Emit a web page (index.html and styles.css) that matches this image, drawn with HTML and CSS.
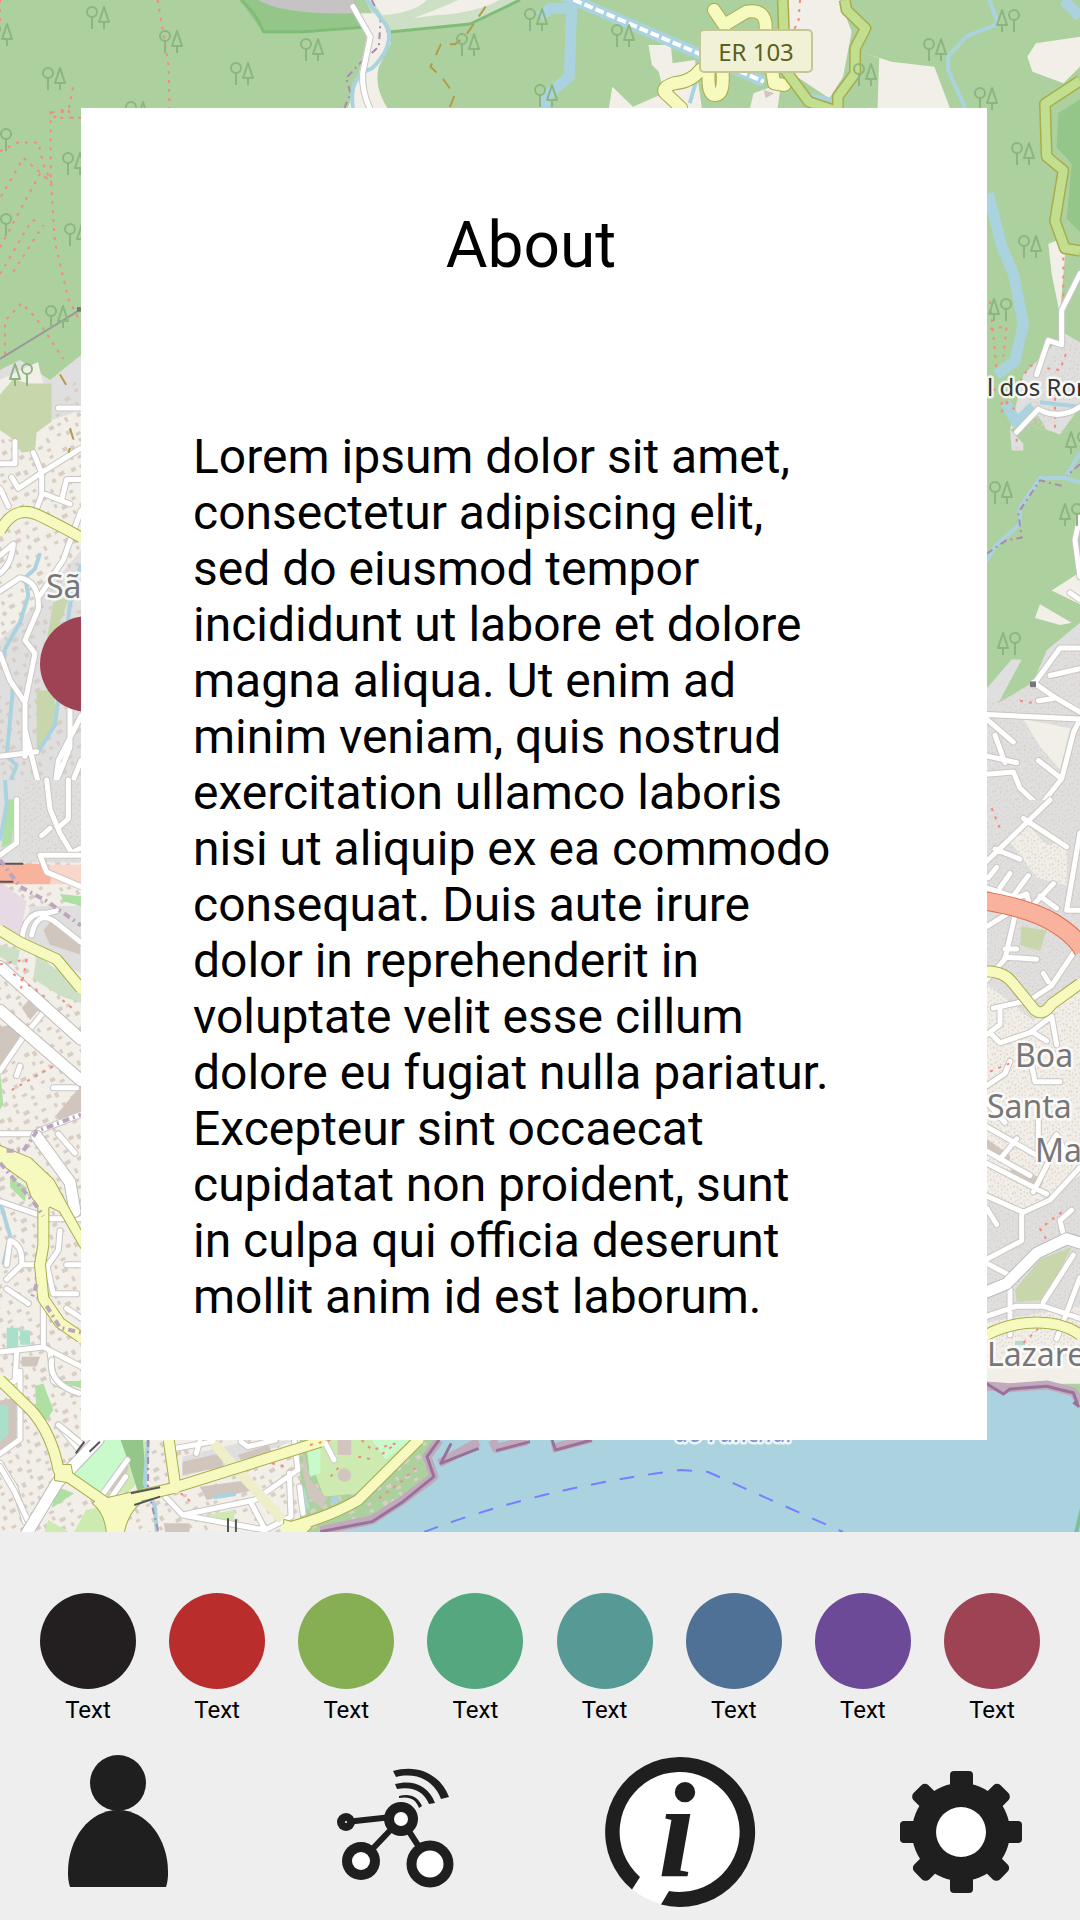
FILE: index.html
```html
<!DOCTYPE html>
<html lang="en">
<head>
<meta charset="utf-8">
<meta name="viewport" content="width=device-width, initial-scale=1">
<title>About</title>
<link rel="stylesheet" href="styles.css">
</head>
<body>
<main class="stage">
<svg class="map" viewBox="0 0 1080 1532" preserveAspectRatio="xMidYMid slice" aria-hidden="true">
  <defs>
    <g id="trees"><circle cx="6" cy="7" r="5"/><path d="M6 12V24M13 17L18 2L23 17ZM18 17V24"/></g>
    <g id="seert"><circle cx="18" cy="7" r="5"/><path d="M18 12V24M1 17L6 2L11 17ZM6 17V24"/></g>
    <pattern id="homes" width="53" height="47" patternUnits="userSpaceOnUse" patternTransform="rotate(-28)">
      <path class="home" d="M3 2h5v4h-5zM11 4h4v5h-4zM22 1h3v4h-3zM28 6h6v4h-6zM41 3h4v3h-4zM6 13h3v4h-3zM13 16h4v3h-4zM24 14h6v4h-6zM36 15h3v4h-3zM45 12h5v3h-5zM1 24h5v4h-5zM10 25h4v3h-4zM19 23h3v5h-3zM32 25h4v4h-4zM41 22h6v4h-6zM5 34h4v3h-4zM14 36h5v4h-5zM26 33h3v4h-3zM35 37h5v3h-5zM46 33h3v5h-3zM22 42h5v3h-5zM42 43h4v3h-4z"/>
    </pattern>
    <path id="west-streets" d="M0 815H45V765M35 845L55 870L125 835L100 790M125 835L243 780M125 830V880L210 905M125 885L110 915M185 895L200 850H243M0 870L25 910M0 1100L60 1070Q120 1080 115 1140L75 1210L105 1240L75 1350V1470M0 1240L30 1300L75 1350M0 1470L110 1460M175 690H243M243 920L190 1030L120 1110M0 1020L40 995Q35 1040 0 1060M75 1410L115 1530M160 1568L175 1480L243 1380M210 1350V1450L150 1560M243 1480L195 1568"/>
    <path id="south-west-streets" d="M50 40V130L0 155M140 0L150 60L180 110L215 150L243 140M150 100L125 115M205 0V80L180 95M65 330Q75 270 140 275L170 270M95 320Q110 270 160 290L243 335M0 600L70 530L130 480M60 590L50 610M160 635H230M0 730H100L130 720L243 690M0 1180L130 1170L243 1210M130 1060V1170M150 1180L160 1240L230 1265M50 1180L45 1240L0 1250M0 870L150 905H243M20 1000L30 950Q70 960 65 1000L20 1030M70 1000H140L160 1060H230M180 930L175 970L145 1000M20 1050L85 1080M200 1000H243M200 1090L243 1110M175 730L225 770M60 1220V1360L0 1390M175 1330L235 1380M0 1410L45 1460L75 1530"/>
    <path id="avenues" d="M0 385L243 535M0 475L243 620M110 735L210 830L225 890"/>
    <path id="harbour-streets" d="M510 265L620 245M570 280L580 245M700 245L720 260L800 240M530 465L740 420L865 330L855 245M840 340L845 470L770 510L730 430M480 410L530 465L660 490L770 510M0 320L40 390L80 480M170 195L235 250M150 0Q140 70 230 100M300 400L370 300M325 410L365 350M870 380L880 460M945 250L970 300"/>
    <path id="east-streets" d="M300 400L245 480V555L205 545L170 620M110 745L175 695Q240 720 300 690M300 930L285 980L300 1060M160 1295L240 1215H300M160 1290L230 1325L300 1355M175 1330L220 1325M210 1275L300 1260M20 1360L300 1370M20 1370L100 1420M45 1405L75 1465M20 1450L110 1465M20 1490L100 1485L120 1520L190 1568M175 1460L245 1500L280 1400L300 1370M245 1500L185 1555M270 1095L300 1110"/>
    <path id="south-east-streets" d="M210 0L20 150M130 45L260 115M45 120L120 145M25 190L50 165M60 215L90 180M100 235L145 185M20 215L110 240L140 230L150 265L220 205M180 235L230 265M300 80L260 270H300M20 310L110 265L75 390L20 440M75 365H110M75 385L170 390M280 375L215 455L150 490L40 510M190 425L205 445M20 575L60 550V510M30 570L60 595L150 570L215 530L230 600M160 570L200 590M20 700L75 670L90 640M155 650L165 690H240M20 740L75 790M20 800L190 880M20 860L150 920M20 890L200 965M110 830L60 880M190 870L230 820L260 870M160 960L210 880M20 970L130 1010L210 980L300 900M125 1015V1080L20 1125M20 1000L50 1040M20 1135L90 1165M275 1005L240 1030L255 1080M90 1200V1310M20 1265L110 1240H190L300 1270M190 1230L280 1115M230 1320L300 1170M175 780V880L240 830"/>
    <path id="hairpins" d="M505 30L535 75L600 35Q660 25 655 90M465 210Q440 245 390 250Q345 265 370 285L410 324M490 210Q485 290 510 285Q535 285 530 215M675 220L680 250L710 255"/>
    <path id="hill-roads" d="M705 0L712 210L780 305L850 330M885 0L890 30L945 85L915 145V220L865 290V330"/>
    <path id="south-west-main" d="M0 310L60 335L170 370L243 430M130 880V960L120 1000L130 1070L180 1120L243 1150"/>
    <path id="harbour-main" d="M0 60L90 150Q150 220 170 330L310 430L500 385L930 245M490 240L510 385M1215 240L1040 420Q960 470 830 505M340 430V525"/>
    <path id="east-main" d="M0 420Q70 415 100 450L165 515Q190 530 215 500L300 450M20 1310Q90 1280 170 1280T300 1310"/>
  </defs>
  <rect class="forest" width="1080" height="1532"/>

  <!-- northern hills -->
  <g transform="scale(.3444 .3333)">
    <path class="park" d="M695 0L765 98L1050 78L1030 0Z"/>
    <path class="quarry" d="M750 0Q820 45 1030 40V0Z"/>
    <path class="meadow" d="M1060 0L1110 98L1365 72L1510 0Z"/>
    <path class="land" d="M1080 0L1110 45Q1200 40 1240 0ZM1200 55Q1290 20 1330 0H1450Q1380 40 1270 45Z"/>
    <path class="edge" d="M700 0Q745 40 765 95H880L1050 82M1110 98L1365 72L1510 0"/>
    <path class="land" d="M1030 40L1065 110L1040 230L1010 324H1125Q1085 260 1100 200L1135 130L1100 40Z"/>
    <path class="admin" d="M1080 0L1105 60L1100 140L1040 195L1005 235L1018 280L1000 324"/>
    <path class="river" d="M1065 0L1125 80Q1145 140 1080 205Q1010 230 1025 324"/>
    <path class="casing" d="M1025 20L1075 110L1053 220Q1050 270 1073 324"/>
    <path class="road" d="M1025 20L1075 110L1053 220Q1050 270 1073 324"/>
    <path class="track" d="M1410 20L1350 110L1320 133H1280L1250 200L1285 235L1320 285L1305 324"/>
    <path class="trail" d="M458 0L490 200L492 324M0 0V95M212 262L200 324L145 360M175 353H240"/>
  </g>
  <g transform="translate(540 0) scale(.3444 .3333)">
    <path class="land" d="M720 0H870L905 95L880 230L840 295L760 240L700 200ZM315 135H380L385 190L450 180L470 324H200L210 260L270 320L360 280L345 215L325 195ZM930 155L1020 185L1145 200L1190 324H980L985 175ZM1568 110L1440 130L1415 170L1430 215L1520 250L1568 200ZM620 280L700 250L690 324H610Z"/>
    <path class="river wide" d="M0 50L30 25H92L85 230L15 290V324"/>
    <path class="river" d="M1305 0L1330 72L1240 108L1185 170V210L1235 324M465 200L435 310M780 285L850 300"/>
    <path class="river wide" d="M65 -15L460 160L650 245M1520 0L1568 50"/>
    <path class="stripe" d="M65 -15L460 160L650 245"/>
    <use class="ycase wide" href="#hairpins"/><use class="yellow wide" href="#hairpins"/>
    <use class="ycase" href="#hill-roads"/><use class="lime" href="#hill-roads"/>
    <path class="trail" d="M755 0L750 70L735 90"/>
    <path class="block" d="M650 270L680 280L655 295Z"/>
  </g>

  <!-- west side -->
  <path class="urban" d="M0 370L20 360L50 380L81 355V790H0Z"/>
  <path class="land" d="M0 380L38 362L52 420L81 410V550L40 600L0 640Z"/>
  <path class="texture" d="M0 435L35 450L81 370V790H0Z"/>
  <g transform="translate(0 100) scale(.3333 .4464)">
    <path class="trail" d="M0 115L55 95H115L130 145L155 185L70 130L0 220M0 330L120 165L150 180M0 390L95 270L120 270M40 385L130 280M152 25V170L165 320L205 445L243 500M15 570V495L65 455L110 490L190 580M155 28L205 20L210 40H240"/>
    <path class="power" d="M0 580L240 470"/>
    <path class="scrub" d="M0 660L40 625L85 635H155V720L110 745L105 785L65 790L30 755L0 740ZM160 1125L210 1110L165 1200L140 1210ZM110 1325L165 1320V1400L110 1460Z"/>
    <path class="river" d="M120 1015L105 1050L75 1070L85 1110L60 1170L15 1230L10 1260M243 1040L210 1130L165 1400L115 1460M40 1310L20 1470L50 1490L10 1568"/>
    <use class="casing" href="#west-streets"/><use class="road" href="#west-streets"/>
    <path class="ycase" d="M0 965Q45 905 115 930T243 980"/><path class="yellow" d="M0 965Q45 905 115 930T243 980"/>
    <path class="track" d="M180 615L200 640L220 630M210 735L220 760L205 790"/>
    <rect class="node" x="231" y="464" width="12" height="10"/>
  </g>
  <rect class="land" y="850" width="300" height="682"/>
  <rect class="texture" y="780" width="440" height="752"/>
  <g transform="translate(0 780) scale(.3333 .4847)">
    <path class="urban" d="M0 0H243V170H0ZM90 260H243V400L70 330Z"/>
    <path class="texture" d="M60 0H243V170H60Z"/>
    <path class="retail" d="M0 210L80 250L60 320L0 300Z"/>
    <path class="green" d="M20 40H45L35 130L5 140ZM0 600L10 670L0 680ZM180 235L243 240V260L190 250ZM105 1250L130 1245L160 1300L130 1330L110 1300ZM30 820L80 840L75 870L30 840ZM170 1240H243V1255Z"/>
    <path class="meadow" d="M0 340L60 350L50 385L0 365ZM110 360L243 430V460L180 445L100 410Z"/>
    <path class="block" d="M0 510L30 505L65 530L0 600ZM130 310L160 285L240 330V360L150 340ZM65 470L85 455L115 475L90 495ZM170 690L243 630V690L180 710ZM0 1280L50 1275V1360L0 1385ZM65 1190H120L110 1210H65Z"/>
    <path class="pitch" d="M20 1130H55V1175H20ZM0 1290H25V1350L0 1365ZM60 1135H90V1165H60Z"/>
    <path class="river" d="M15 0L20 50L0 125M0 870L30 940L10 1000"/>
    <use class="casing" href="#south-west-streets"/><use class="road" href="#south-west-streets"/>
    <use class="casing wide" href="#avenues"/><use class="road wide" href="#avenues"/>
    <path class="tunnel" d="M150 175H243V215H120Z"/>
    <path class="motorway-fill" d="M0 173H130L155 190L150 215H0Z"/>
    <path class="rail" d="M0 173H70M0 210H40"/>
    <path class="casing" d="M243 155H120L140 190L243 220"/><path class="road" d="M243 155H120L140 190L243 220"/>
    <use class="ycase" href="#south-west-main"/>
    <path class="ramp-edge" d="M0 755L90 780L160 825L243 930V965L180 890L150 880L130 890L95 860L80 830L0 790Z"/>
    <use class="yellow" href="#south-west-main"/>
    <path class="ramp" d="M0 755L90 780L160 825L243 930V965L180 890L150 880L130 890L95 860L80 830L0 790Z"/>
    <path class="admin thick" d="M0 165L60 220L140 250L243 300M0 790L100 870L130 900M20 765H70L110 725L243 690M110 1040L95 1070M140 1085L180 1130L243 1140"/>
    <path class="trail" d="M0 380L80 370L60 440M40 400L140 450M35 640L160 590M215 470L180 450"/>
  </g>

  <!-- waterfront -->
  <g transform="translate(0 1360) scale(.3444 .3333)">
    <path class="grass" d="M285 240H420L430 330L380 390L350 400L280 400L215 350Z"/>
    <path class="mint" d="M285 240H350L365 290L310 395H280L215 350L230 310Z"/>
    <path class="park" d="M350 240H415L425 380L400 395L375 310Z"/>
    <path class="grass" d="M215 516L250 450L295 440L310 516ZM880 240H1190L1040 400L940 410ZM600 465L680 450V490ZM130 516L140 480L200 516Z"/>
    <path class="mint" d="M890 250L930 255V340L900 350ZM1080 240H1190L1120 300Z"/>
    <path class="green" d="M165 380L215 400L150 445Z"/>
    <path class="urban" d="M530 290L690 250L860 240L700 300L530 350Z"/>
    <path class="block" d="M880 270L900 360L950 415L935 445L895 410L880 340ZM580 380L720 360L740 390L600 420ZM530 305L640 280L650 320L530 345ZM690 285L780 255L790 280L700 300ZM475 490H550V516H480ZM980 240H1020V285H980ZM300 385L350 310L375 320L340 400ZM980 345A20 20 0 1 1 1020 345A20 20 0 1 1 980 345Z"/>
    <path class="pitch" d="M870 390L885 385L900 445L885 450Z"/>
    <path class="lake" d="M620 405L685 395V408L622 418ZM960 420A11 12 0 1 1 982 420A11 12 0 1 1 960 420Z"/>
    <path class="sea" d="M920 516L1080 485L1260 350L1240 290L1260 240H1568V516Z"/>
    <path class="coast" d="M930 512L1080 480L1170 420L1260 350L1240 290L1275 240M1275 310L1390 245M1430 240L1440 265L1530 243"/>
    <path class="coastline" d="M930 515L1080 485L1170 425L1260 350L1240 290L1275 240M1310 250L1280 310L1390 265M1440 272L1540 245"/>
    <path class="river" d="M430 240L420 370L450 440L455 516"/><path class="admin" d="M430 240V390L460 516"/>
    <use class="casing" href="#harbour-streets"/><use class="road" href="#harbour-streets"/>
    <path class="casing wide" d="M285 240L165 370L75 525"/><path class="road wide" d="M285 240L165 370L75 525"/>
    <path class="pale" d="M620 250L820 480"/>
    <use class="ycase" href="#harbour-main"/>
    <path class="ramp-edge" d="M290 415L330 425L410 405V425Q370 460 360 516H310Q305 460 270 430ZM160 315H205L215 370L160 360ZM825 480L860 490L905 500L890 516H825Z"/>
    <use class="yellow" href="#harbour-main"/>
    <path class="ramp" d="M290 415L330 425L410 405V425Q370 460 360 516H310Q305 460 270 430ZM160 315H205L215 370L160 360ZM825 480L860 490L905 500L890 516H825Z"/>
    <path class="rail" d="M220 280L245 245M260 275L290 245M380 400L465 382M390 435L465 410M662 475V516M685 478V516"/>
    <path class="trail" d="M900 255L960 240M1050 240L1080 270L1150 250L1100 290M1040 290L1090 300M790 310L830 320M960 350L985 320M1100 415L1160 370L1220 310M525 400L560 430"/>
  </g>
  <rect class="sea" x="530" y="1436" width="550" height="96"/>
  <g transform="translate(540 1360) scale(.3444 .3333)">
    <path class="coast" d="M35 265L150 235"/><path class="coastline" d="M35 240L45 270L150 240"/>
    <path class="shore" d="M1555 525L1575 440"/>
  </g>
  <path class="ferry" d="M424 1532Q540 1488 681 1470L708 1472L843 1532"/>

  <!-- east side -->
  <g transform="translate(980 90) scale(.3333 .4592)">
    <path class="park" d="M300 20L235 50L230 125L275 160L260 280L300 310Z"/>
    <path class="land" d="M205 335L240 325L255 360L240 490L215 400ZM165 1150L180 1120L275 1160L240 1165ZM215 1090L300 1050V1120Z"/>
    <path class="urban" d="M90 740L130 770V785H95ZM130 620L255 530L300 550V690L240 750L200 740L175 710L90 740ZM0 1320L95 1240H125L55 1335L160 1290L200 1220L300 1160V1568H0Z"/>
    <path class="texture" d="M90 740L255 530L300 550V690L200 740ZM0 1340L160 1290L300 1180V1568H0Z"/>
    <path class="land" d="M130 1370L270 1390L240 1480L180 1430Z"/>
    <path class="river wide" d="M25 225L65 340L100 400L130 510L105 590L50 620M75 680L110 725L160 690"/>
    <path class="river" d="M300 790L255 845H180L120 910V945L50 990L20 1025M180 680L300 690M255 845L300 855"/>
    <path class="admin" d="M300 815L260 840M245 862L180 850L115 920L125 975L80 980L20 1010"/>
    <path class="trail" d="M250 365V450M30 460L50 610M30 520L80 515L70 580M65 640V700L150 600L240 610L260 570M110 740V780M225 670V740M40 650L110 700M120 1330L160 1335"/>
    <use class="casing" href="#east-streets"/><use class="road" href="#east-streets"/>
    <path class="ycase" d="M300 -20L195 30L200 145L250 175L225 285L255 345L300 350"/><path class="lime" d="M300 -20L195 30L200 145L250 175L225 285L255 345L300 350"/>
    <rect class="node" x="150" y="1288" width="18" height="12"/>
  </g>
  <path class="urban" d="M980 800H1080V1380H980Z"/>
  <g transform="translate(980 800) scale(.3333 .4082)">
    <path class="land" d="M80 90L130 50L200 110L260 100V210L170 190ZM20 450L160 540L300 450V920L130 1010L20 960ZM20 1280L300 1240V1430H20Z"/>
    <path class="texture" d="M0 0H300V1380H0Z"/>
    <path class="block" d="M20 830L90 870V890L20 860ZM100 890L190 930L180 955L90 915Z"/>
    <path class="scrub" d="M125 310L200 320L180 370L120 355ZM105 1200L180 1125L275 1095L195 1225L110 1230Z"/>
    <path class="pitch" d="M105 1325H135V1335H105Z"/>
    <use class="casing" href="#south-east-streets"/><use class="road" href="#south-east-streets"/>
    <path class="casing wide" d="M20 1205L80 1185L170 1110L260 1075L300 1085"/><path class="road wide" d="M20 1205L80 1185L170 1110L260 1075L300 1085"/>
    <use class="ycase" href="#east-main"/><use class="yellow" href="#east-main"/>
    <path class="mcase" d="M0 245Q150 265 220 300T310 370"/><path class="motorway" d="M0 245Q150 265 220 300T310 370"/>
    <path class="trail" d="M35 20L60 70M30 665L90 645M245 1010L180 1050L205 1085M130 1330L175 1295"/>
    <path class="sea" d="M0 1435L90 1438L200 1433L280 1448L300 1475V1568H0Z"/>
    <path class="coast" d="M10 1435L90 1440L200 1433L280 1450L300 1475"/>
    <path class="coastline" d="M20 1430L70 1455L90 1443L200 1436L280 1452L295 1485L280 1475"/>
  </g>

  <g class="trees">
    <use href="#trees" x="86" y="5"/><use href="#trees" x="-11" y="22"/><use href="#trees" x="159" y="29"/><use href="#trees" x="42" y="66"/><use href="#trees" x="230" y="61"/><use href="#trees" x="300" y="37"/><use href="#trees" x="456" y="32"/><use href="#trees" x="125" y="100"/><use href="#trees" x="534" y="83"/><use href="#trees" x="611" y="23"/><use href="#trees" x="524" y="7"/><use href="#trees" x="923" y="37"/><use href="#trees" x="974" y="86"/><use href="#trees" x="853" y="62"/><use href="#seert" x="996" y="8"/>
    <use href="#seert" x="-12" y="127"/><use href="#seert" x="-12" y="212"/><use href="#trees" x="62" y="151"/><use href="#trees" x="64" y="222"/><use href="#trees" x="45" y="304"/><use href="#seert" x="9" y="362"/>
    <use href="#trees" x="1011" y="141"/><use href="#trees" x="1018" y="234"/><use href="#seert" x="988" y="297"/><use href="#seert" x="1065" y="430"/><use href="#trees" x="989" y="480"/><use href="#seert" x="1059" y="502"/><use href="#seert" x="997" y="631"/>
  </g>

  <rect class="shield" x="700" y="30" width="112" height="42" rx="4"/>
  <text class="ref" x="756" y="61" text-anchor="middle">ER 103</text>
  <text class="village" x="987" y="396">l dos Rom</text>
  <text class="town" x="46" y="598">Sã</text>
  <text class="town" x="1015" y="1067">Boa</text>
  <text class="town" x="987" y="1118">Santa</text>
  <text class="town" x="1035" y="1162">Ma</text>
  <text class="town" x="987" y="1366">Lazare</text>
  <text class="water" x="675" y="1442">do Funchal</text>
  <circle class="marker" cx="88" cy="664" r="48"/>
</svg>

<section class="card" aria-labelledby="about-title">
  <h1 class="card-title" id="about-title">About</h1>
  <p class="card-text">Lorem ipsum dolor sit amet, consectetur adipiscing elit, sed do eiusmod tempor incididunt ut labore et dolore magna aliqua. Ut enim ad minim veniam, quis nostrud exercitation ullamco laboris nisi ut aliquip ex ea commodo consequat. Duis aute irure dolor in reprehenderit in voluptate velit esse cillum dolore eu fugiat nulla pariatur. Excepteur sint occaecat cupidatat non proident, sunt in culpa qui officia deserunt mollit anim id est laborum.</p>
</section>
</main>

<footer class="panel">
  <div class="swatches">
    <button class="swatch black" type="button"><span class="dot"></span>Text</button>
    <button class="swatch red" type="button"><span class="dot"></span>Text</button>
    <button class="swatch lime-green" type="button"><span class="dot"></span>Text</button>
    <button class="swatch emerald" type="button"><span class="dot"></span>Text</button>
    <button class="swatch teal" type="button"><span class="dot"></span>Text</button>
    <button class="swatch blue" type="button"><span class="dot"></span>Text</button>
    <button class="swatch purple" type="button"><span class="dot"></span>Text</button>
    <button class="swatch wine" type="button"><span class="dot"></span>Text</button>
  </div>
  <nav class="tools">
    <button class="tool" type="button" aria-label="Profile">
      <svg viewBox="0 0 160 160"><circle cx="80" cy="31" r="28"/><path d="M32 135C30 129 30 124 30 120C30 87 51 58 80 58S130 87 130 120C130 124 130 129 128 135Z"/></svg>
    </button>
    <button class="tool" type="button" aria-label="Vehicles">
      <svg viewBox="0 0 160 160">
        <path class="bars" d="M27 70L82 64M82 67L42 109M82 67L111 112"/>
        <circle cx="27" cy="70" r="9"/><circle cx="82" cy="67" r="17"/><circle cx="42" cy="109" r="19"/><circle cx="111" cy="112" r="23.500"/>
        <g class="hole"><circle cx="27" cy="70" r="1"/><circle cx="82" cy="67" r="7"/><circle cx="42" cy="109" r="9"/><circle cx="111" cy="112" r="13.500"/></g>
        <path d="M74 19C97 12 121 21 130 45L122 47C115 28 97 20 77 25ZM76 32C94 27 110 34 116 51L110 52C105 39 93 34 78 37ZM80 44C90 41 99 44 103 54L100 56C97 47 90 44 80 46Z"/>
      </svg>
    </button>
    <button class="tool" type="button" aria-label="About">
      <svg viewBox="0 0 160 160"><circle class="hole" cx="79" cy="80" r="74.500"/><path d="M31 137.500A75 75 0 1 1 60 152.500L68 139A60 60 0 1 0 39 125Z"/><text class="info-letter" x="76" y="124" text-anchor="middle">i</text></svg>
    </button>
    <button class="tool" type="button" aria-label="Settings">
      <svg viewBox="0 0 160 160">
        <g transform="translate(79 80)"><circle r="49"/>
          <rect x="-11" y="-61" width="23" height="122" rx="4"/><rect x="-61" y="-11" width="122" height="22" rx="4"/>
          <g transform="rotate(45)"><rect x="-10" y="-61" width="21" height="122" rx="5"/><rect x="-61" y="-10" width="122" height="21" rx="5"/></g>
          <circle class="hole" r="25"/></g>
      </svg>
    </button>
  </nav>
</footer>
</body>
</html>
```
FILE: styles.css
```css
* { box-sizing: border-box; }

body {
  margin: 0;
  min-height: 100vh;
  display: flex;
  flex-direction: column;
  font-family: Roboto, sans-serif;
  color: #000;
  background: #eee;
}

button {
  margin: 0;
  padding: 0;
  border: 0;
  background: none;
  font: inherit;
  color: inherit;
  cursor: pointer;
}

/* Map and card */
.stage {
  position: relative;
  flex: 1;
  overflow: hidden;
  padding: 108px 93px 92px 81px;
}

.map {
  position: absolute;
  inset: 0;
  width: 100%;
  height: 100%;
}

.card {
  position: relative;
  min-height: 100%;
  padding: 100px 154px 115px 112px;
  background: #fff;
}

.card-title {
  margin: 0 -36px 145px 0;
  font-size: 64px;
  line-height: 76px;
  font-weight: 400;
  text-align: center;
}

.card-text {
  margin: 0;
  font-size: 48px;
  line-height: 56px;
}

/* Bottom panel */
.panel {
  display: flex;
  flex-direction: column;
  gap: 28px;
  padding: 61px 38px 8px;
  background: #eee;
}

.swatches {
  display: flex;
  justify-content: space-between;
  padding: 0 2px;
}

.swatch {
  display: flex;
  flex-direction: column;
  align-items: center;
  gap: 7px;
  font-size: 24px;
  line-height: 28px;
}

.dot {
  width: 96px;
  height: 96px;
  border-radius: 50%;
}

.black .dot { background: #231f20; }
.red .dot { background: #b92d2d; }
.lime-green .dot { background: #86ae53; }
.emerald .dot { background: #54a77f; }
.teal .dot { background: #579a95; }
.blue .dot { background: #507196; }
.purple .dot { background: #6c4a98; }
.wine .dot { background: #9e4353; }

.tools {
  display: flex;
  justify-content: space-between;
}

.tool,
.tool svg {
  display: block;
  width: 160px;
  height: 160px;
  fill: #1f1f1f;
}

.tool .hole { fill: #fff; }
.tool .bars { stroke: #1f1f1f; stroke-width: 6; }
.info-letter { font: italic 700 136px "Liberation Serif", serif; }

/* Map drawing */
.map path { vector-effect: non-scaling-stroke; stroke-linejoin: round; }
.forest { fill: #add19e; }
.park { fill: #94c68a; }
.quarry { fill: #c5c3c3; }
.meadow { fill: #cddfc5; }
.land { fill: #f2efe9; }
.urban { fill: #e0dfdf; }
.texture { fill: url(#homes); }
.home { fill: #d9cec6; }
.block { fill: #d1c6bd; }
.scrub { fill: #c8d7ab; }
.grass { fill: #cdebb0; }
.green { fill: #aedfa3; }
.mint { fill: #c8facc; }
.pitch { fill: #aae0cb; }
.retail { fill: #e8dae5; }
.sea, .lake { fill: #aad3df; }
.edge { fill: none; stroke: #7fbd76; stroke-width: 3; }
.river { fill: none; stroke: #aad3df; stroke-width: 4; }
.river.wide { stroke-width: 11; }
.stripe { fill: none; stroke: #fff; stroke-width: 4; stroke-dasharray: 9 3; }
.admin { fill: none; stroke: #ac8aae; stroke-width: 2; stroke-dasharray: 7 4 2 4; }
.admin.thick { stroke: #bda4bf; stroke-width: 4; }
.track { fill: none; stroke: #b39b48; stroke-width: 2; stroke-dasharray: 12 9; }
.trail { fill: none; stroke: #f28b7d; stroke-width: 2; stroke-dasharray: 3 6; }
.power { fill: none; stroke: #999; stroke-width: 2; }
.casing { fill: none; stroke: #c9c6c4; stroke-width: 7; stroke-linecap: round; }
.road { fill: none; stroke: #fff; stroke-width: 5; stroke-linecap: round; }
.casing.wide { stroke: #bbb; stroke-width: 13; }
.road.wide { stroke-width: 11; }
.ycase { fill: none; stroke: #a8ad4c; stroke-width: 12; }
.yellow { fill: none; stroke: #f6fabe; stroke-width: 10; stroke-linecap: round; }
.ycase.wide { stroke-width: 14; stroke-linecap: round; }
.yellow.wide { stroke-width: 12; }
.lime { fill: none; stroke: #c2df8f; stroke-width: 9; }
.pale { fill: none; stroke: #eeefc8; stroke-width: 10; }
.ramp { fill: #f6fabe; }
.ramp-edge { fill: none; stroke: #a8ad4c; stroke-width: 2; }
.mcase { fill: none; stroke: #dd6b50; stroke-width: 19; }
.motorway { fill: none; stroke: #f9b29c; stroke-width: 17; }
.motorway-fill { fill: #f9b29c; }
.tunnel { fill: #fad5ca; }
.rail { fill: none; stroke: #555; stroke-width: 2; }
.node { fill: #777; }
.coast { fill: none; stroke: #c2aabd; stroke-width: 9; }
.coastline { fill: none; stroke: #9a719b; stroke-width: 3; }
.shore { fill: none; stroke: #7bbf9f; stroke-width: 4; }
.ferry { fill: none; stroke: #7a7dff; stroke-width: 2; stroke-dasharray: 15 14; }
.trees { fill: none; stroke: #8bb67f; stroke-width: 2; }
.shield { fill: #f1f1d5; stroke: #c5c595; stroke-width: 2; }
.marker { fill: #9e4353; }

.ref, .village, .town, .water { font-family: "Noto Sans", sans-serif; font-size: 24px; }
.ref { fill: #5b5f20; }
.village, .town, .water { paint-order: stroke; stroke: #fff; stroke-opacity: .8; stroke-width: 5; stroke-linejoin: round; }
.village { fill: #333; }
.town { fill: #777; font-size: 32px; }
.water { fill: #8095d0; font-style: italic; }
```
